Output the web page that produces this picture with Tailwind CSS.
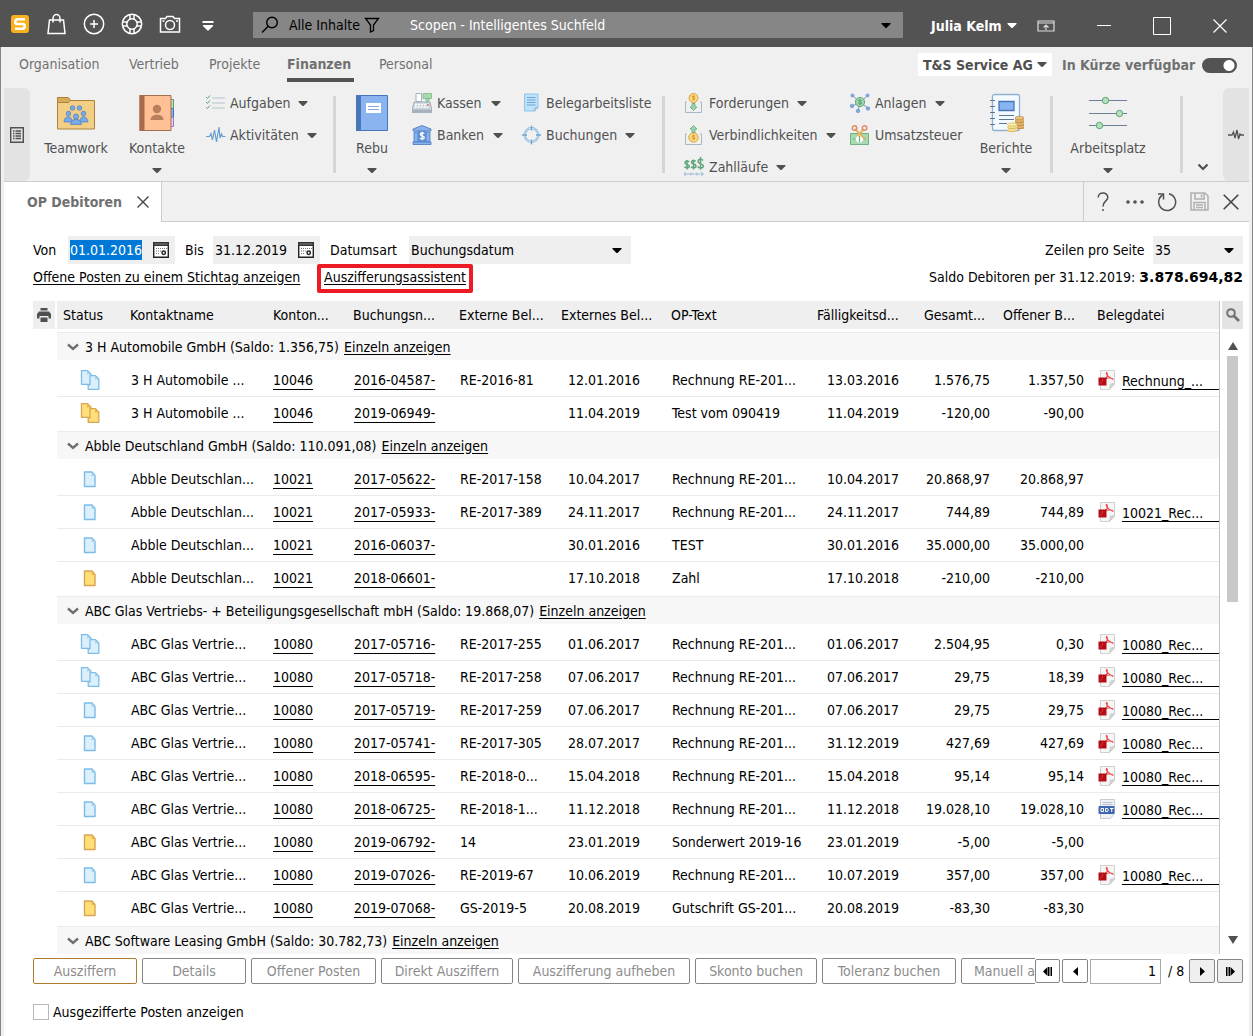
<!DOCTYPE html>
<html lang="de">
<head>
<meta charset="utf-8">
<title>OP Debitoren</title>
<script src="https://cdn.jsdelivr.net/npm/@tailwindcss/browser@4"></script>
</head>
<body class="bg-white text-black text-[14px] leading-5 font-['DejaVu_Sans_Condensed','Noto_Sans',sans-serif]">

<svg class="hidden" aria-hidden="true">
  <symbol id="down" viewBox="0 0 10 5"><path d="M0.5 0h9v1L5.5 5h-1L0.5 1z" fill="currentColor"/></symbol>
  <symbol id="doc-blue" viewBox="0 0 20 20"><path d="M4.500 3h7.500l3 3.500V17.500h-10.500z" fill="#dcf0fc" stroke="#7dbbe8" stroke-width="1.400" stroke-linejoin="round"/><path d="M11.500 3.500v3.500h3.500z" fill="#a9d5f2"/></symbol>
  <symbol id="doc-gold" viewBox="0 0 20 20"><path d="M4.500 3h7.500l3 3.500V17.500h-10.500z" fill="#ffdf78" stroke="#d8a557" stroke-width="1.400" stroke-linejoin="round"/><path d="M11.500 3.500v3.500h3.500z" fill="#f0b93c"/></symbol>
  <symbol id="docs-blue" viewBox="0 0 20 20"><path d="M1.500 .7h6l3.500 3.500V14.300h-9.500z" fill="#dcf0fc" stroke="#7dbbe8" stroke-width="1.300" stroke-linejoin="round"/><path d="M10 5.700h5.500l3.300 3.500v10.100H8.200v-4.500H10z" fill="#dcf0fc" stroke="#7dbbe8" stroke-width="1.300" stroke-linejoin="round"/><path d="M7 1v3.500h3.500zM15 6.200v3.300h3.300z" fill="#a9d5f2"/></symbol>
  <symbol id="docs-gold" viewBox="0 0 20 20"><path d="M1.500 .7h6l3.500 3.500V14.300h-9.500z" fill="#ffdf78" stroke="#d8a557" stroke-width="1.300" stroke-linejoin="round"/><path d="M10 5.700h5.500l3.300 3.500v10.100H8.200v-4.500H10z" fill="#ffdf78" stroke="#d8a557" stroke-width="1.300" stroke-linejoin="round"/><path d="M7 1v3.500h3.500zM15 6.200v3.300h3.300z" fill="#f0b93c"/></symbol>
  <symbol id="pdf" viewBox="0 0 18 20"><path d="M2.500 .5h14v14l-5 5h-9z" fill="#f6f6f6" stroke="#d0d0d0"/><path d="M16.500 13.500c-2 0-4.500 .5-4.500 1 .5 2-.5 4-1 5z" fill="#d5d5d5" stroke="#c4c4c4" stroke-width=".6"/><path d="M8.500 2c-1 2 2 6 7 7.500M9 2.500c1 3 0 5-2 6.500 2-1 5-1.300 8-.5" fill="none" stroke="#ee4a4a" stroke-width="1.200"/><path d="M0.500 7.500h8v8h-8z" fill="#b50d14"/><path d="M2 13.500c2-1 3-3 2.500-4.500" fill="none" stroke="#d8484c" stroke-width=".8"/></symbol>
  <symbol id="odt" viewBox="0 0 18 20"><path d="M2.500 .5h14v14l-4 5h-10z" fill="#eef2f7" stroke="#c5ccd6"/><path d="M4.500 3.500h10M4.500 5.500h10" stroke="#b4bfcf"/><rect x=".5" y="7" width="16" height="8" rx="1" fill="#3f66b0"/><path d="M3 9.500h2.500v3H3zM7.500 9.500h2l.8 1.500-.8 1.500h-2zM12 9.500h3.500M13.700 9.500v3.500" fill="none" stroke="#fff"/></symbol>
  <symbol id="calendar" viewBox="0 0 16 16"><path d="M.7.700h14.600v14.600H.7z" fill="#fff" stroke="#222" stroke-width="1.400"/><path d="M0 0h16v4H0z" fill="#333"/><path d="M1.500 2h13" stroke="#999" stroke-width=".8"/><path d="M3 6.500h11M3 9h5M3 11.500h4" stroke="#777" stroke-width="1.200" stroke-dasharray="1 1"/><circle cx="10.700" cy="10.700" r="1.700" fill="#fff" stroke="#222" stroke-width="1.500"/></symbol>
</svg>

<header class="flex h-[47px] items-center bg-[#535353] pl-px pr-1 text-white">
  <button class="flex w-[37px] justify-center" aria-label="Scopevisio"><svg class="mt-px size-[18px]" viewBox="0 0 18 18"><rect width="18" height="18" rx="3" fill="#fbb11e"/><path d="M14 4.300H6.500C3.500 4.300 3.500 9 6.500 9h5c3 0 3 4.700 0 4.700H4" fill="none" stroke="#fff" stroke-width="2.600"/></svg></button>
  <button class="flex w-[37px] justify-center" aria-label="Einkaufen"><svg class="size-[22px]" viewBox="0 0 22 22" fill="none" stroke="#fff" stroke-width="1.500"><path d="M3.500 7h14l1.500 13.500H2zM7 9.500V5.500a3.500 4 0 0 1 7 0v4"/></svg></button>
  <button class="flex w-[38px] justify-center" aria-label="Neu"><svg class="size-[22px]" viewBox="0 0 22 22" fill="none" stroke="#fff" stroke-width="1.500"><circle cx="11" cy="11" r="9.700"/><path d="M11 7v8M7 11h8"/></svg></button>
  <button class="flex w-[38px] justify-center" aria-label="Hilfe"><svg class="size-[22px]" viewBox="0 0 22 22" fill="none" stroke="#fff" stroke-width="1.500"><circle cx="11" cy="11" r="9.700"/><circle cx="11" cy="11" r="5.200"/><path d="M9 1.500v5M13 1.500v5M9 15.500v5M13 15.500v5M1.500 9h5M1.500 13h5M15.500 9h5M15.500 13h5"/></svg></button>
  <button class="flex w-[38px] justify-center" aria-label="Kamera"><svg class="size-[22px]" viewBox="0 0 22 22" fill="none" stroke="#fff" stroke-width="1.500"><path d="M1.500 5.500h5l1.500-2h6l1.500 2h5v13.500h-19z"/><circle cx="11" cy="12" r="4.500"/><path d="M3.500 8h2M17 8h2"/></svg></button>
  <button class="flex w-[38px] justify-center" aria-label="Mehr"><svg class="mt-1 h-[10px] w-[12px]" viewBox="0 0 12 10" fill="#fff"><path d="M.5 0h11v2H.5zM1 4h10v1L6.500 9.500h-1L1 5z"/></svg></button>

  <div class="ml-[26px] mt-[3px] flex h-[26px] min-w-0 flex-1 items-center bg-[#868686] pl-2">
    <svg class="size-[18px]" viewBox="0 0 18 18" fill="none" stroke="#000" stroke-width="1.400"><circle cx="11" cy="6.500" r="5.300"/><path d="M7 10.500L1 16.500"/></svg>
    <button class="ml-[10px] flex w-[91px] items-center justify-between whitespace-nowrap text-black">Alle Inhalte<svg class="size-4" viewBox="0 0 16 16" fill="none" stroke="#000" stroke-width="1.300"><path d="M1.500 1.500h13L9.500 8v5.500l-3 1.500V8z"/></svg></button>
    <input aria-label="Suche" placeholder="Scopen - Intelligentes Suchfeld" class="ml-[30px] min-w-0 flex-1 bg-transparent text-white outline-none placeholder:text-white">
    <svg class="mr-3 h-[5px] w-[10px] text-black"><use href="#down"/></svg>
  </div>

  <button class="ml-7 mt-1 flex w-[86px] items-center justify-between whitespace-nowrap font-bold">Julia Kelm<svg class="h-[5px] w-[10px]"><use href="#down"/></svg></button>
  <button class="ml-5 mt-1" aria-label="Menüband"><svg class="h-[12px] w-[18px]" viewBox="0 0 18 12" fill="none" stroke="#ddd" stroke-width="1.200"><path d="M1 1h16v10H1zM1 3h16M9 10V5.500M6.500 7.500L9 5l2.500 2.500"/></svg></button>
  <button class="ml-5 mt-1 flex w-[58px] justify-center" aria-label="Minimieren"><svg class="h-[2px] w-[14px]" viewBox="0 0 14 2"><path d="M0 0h14v1H0z" fill="#fff"/></svg></button>
  <button class="mt-1 flex w-[58px] justify-center" aria-label="Maximieren"><svg class="size-[18px]" viewBox="0 0 18 18"><path d="M.5.500h17v17H.5z" fill="none" stroke="#fff"/></svg></button>
  <button class="mt-1 flex w-[58px] justify-center" aria-label="Schließen"><svg class="size-[14px]" viewBox="0 0 14 14"><path d="M.5.500l13 13M13.500.500l-13 13" stroke="#fff" stroke-width="1.200"/></svg></button>
</header>

<div class="border-x border-[#858585] bg-[#f0f0f0] px-[3px]">
  <nav class="flex h-[38px] items-start whitespace-nowrap text-[#707070]">
    <a href="#" class="ml-[15px] w-[110px] pt-[7px]">Organisation</a>
    <a href="#" class="w-[80px] pt-[7px]">Vertrieb</a>
    <a href="#" class="w-[78px] pt-[7px]">Projekte</a>
    <a href="#" class="h-[35px] w-[67px] border-b-4 border-[#535353] pt-[7px] font-bold">Finanzen</a>
    <a href="#" class="ml-[25px] pt-[7px]">Personal</a>
    <button class="ml-auto mt-[6px] flex h-[23px] w-[134px] items-center justify-between bg-white pl-[5px] pr-[5px] font-bold text-[#505050]">T&amp;S Service AG<svg class="h-[5px] w-[10px]"><use href="#down"/></svg></button>
    <label class="ml-[10px] mr-3 flex w-[175px] items-center justify-between pt-2 font-bold">In Kürze verfügbar
      <input type="checkbox" checked class="h-[15px] w-[35px] appearance-none rounded-full bg-[#535353] bg-[radial-gradient(circle_at_27px_50%,#fff_5px,transparent_6px)]">
    </label>
  </nav>

  <div class="flex h-[97px] border-b border-[#cdcdcd] text-[#505050] whitespace-nowrap">
    <button class="mt-[3px] flex w-[26px] items-center justify-center rounded-r-md bg-[#e3e3e3]" aria-label="Navigation"><svg class="h-4 w-[14px]" viewBox="0 0 14 16" fill="none" stroke="#505050"><path d="M.7.700h12.600v14.600H.7z" stroke-width="1.400"/><path d="M3 4h1.500M5.500 4H11M3 6.500h1.500M5.500 6.500H11M3 9h1.500M5.500 9H11M3 11.500h1.500M5.500 11.500H11" stroke-width="1.300"/></svg></button>
    <button class="flex w-[92px] flex-col items-center pt-[10px]"><svg class="h-[36px] w-[38px]" viewBox="0 0 38 36"><path d="M.5 2.500h10.500l2.500 3h24v28.500H.5z" fill="#f3cf85" stroke="#a98339"/><path d="M.5 2.500h10.500l2.500 3-2 2H.5z" fill="#d9aa57" stroke="#a98339"/><g fill="#78a9e8" stroke="#4d7cc2" stroke-width=".7"><circle cx="15.500" cy="13" r="2.300"/><circle cx="22.500" cy="13" r="2.300"/><circle cx="11.500" cy="18.500" r="2.300"/><circle cx="26.500" cy="18.500" r="2.300"/><path d="M7 27c0-7 8-7 8.500 0zM22.500 27c.5-7 8-7 8.500 0z"/><circle cx="19" cy="21.500" r="2.600"/><path d="M13.500 29.500c0-7 11-7 11 0z"/></g></svg><span class="mt-[7px]">Teamwork</span></button>
    <button class="flex w-[70px] flex-col items-center pt-[10px]"><svg class="h-[36px] w-[36px]" viewBox="0 0 36 36"><path d="M31 4.500h3.500v9H31z" fill="#bfe3c4" stroke="#58a068"/><path d="M31 13.500h3.500v9H31z" fill="#7fb0f0" stroke="#4472c0"/><path d="M31 22.500h3.500v9H31z" fill="#e2d3f0" stroke="#9a7cc0"/><path d="M1 .5h31v35H1z" fill="#ffc095" stroke="#a56f4f"/><path d="M.5 0h5v36h-5z" fill="#a66b4b"/><circle cx="18" cy="14" r="4.200" fill="#b97f5a"/><path d="M11.500 25c0-7 13-7 13 0z" fill="#b97f5a"/></svg><span class="mt-[7px]">Kontakte</span><svg class="mt-[10px] h-[5px] w-[10px]"><use href="#down"/></svg></button>
    <div class="flex w-[141px] flex-col pl-[14px] pt-[2px]">
      <button class="flex h-8 items-center gap-1"><svg class="size-5" viewBox="0 0 20 20" fill="none"><path d="M6 5h13M6 10h13M6 15h13" stroke="#b6c3d0" stroke-width="1.200"/><path d="M0 4l1.500 1.500L4 2.500M0 9l1.500 1.500L4 7.500M0 14l1.500 1.500L4 12.500" stroke="#5fa57b"/></svg>Aufgaben<svg class="ml-1 h-[5px] w-[10px]"><use href="#down"/></svg></button>
      <button class="flex h-8 items-center gap-1"><svg class="size-5" viewBox="0 0 20 20" fill="none"><path d="M0 11.500h3.500L5 8.500 6.500 15 8.500 5l2 12 2.500-15 1 11 1.500-4 1 2.500h3" stroke="#6a9fd0" stroke-width="1.200"/></svg>Aktivitäten<svg class="ml-1 h-[5px] w-[10px]"><use href="#down"/></svg></button>
    </div>
    <div class="mt-[11px] h-[77px] w-[3px] bg-[#d5d5d5]"></div>
    <button class="flex w-[72px] flex-col items-center pt-[10px]"><svg class="h-[36px] w-[32px]" viewBox="0 0 32 36"><path d="M.5.500h31v35H.5z" fill="#8ab4f0" stroke="#4976b8"/><path d="M0 0h5v36H0z" fill="#4976b8"/><path d="M10 8h15v10H10z" fill="#fff"/><path d="M12 11.500h11M12 14.500h11" stroke="#8aa9d8"/></svg><span class="mt-[7px]">Rebu</span><svg class="mt-[10px] h-[5px] w-[10px]"><use href="#down"/></svg></button>
    <div class="flex w-[112px] flex-col pl-1 pt-[2px]">
      <button class="flex h-8 items-center gap-[5px]"><svg class="size-5" viewBox="0 0 20 20"><path d="M2 9h16l2 8v3H0v-3z" fill="#cdd6de" stroke="#94a3b0" stroke-width=".8"/><path d="M4 .5h5.500v8H4z" fill="#fff" stroke="#8fa0ae" stroke-width=".8"/><path d="M11 .5h8.500v5H11zM14 5.500h3v3h-3z" fill="#a8d9b0" stroke="#7fb88a" stroke-width=".8"/><path d="M3 11.500h14M2.500 14h15" stroke="#fff" stroke-width="1.500" stroke-dasharray="2 1"/><path d="M0 16.500h20V20H0z" fill="#a5b2bd"/><path d="M15 11h2v2h-2z" fill="#e88"/></svg>Kassen<svg class="ml-1 h-[5px] w-[10px]"><use href="#down"/></svg></button>
      <button class="flex h-8 items-center gap-[5px]"><svg class="size-5" viewBox="0 0 20 20"><path d="M10 .5L19 4v2H1V4z" fill="#86b1ec" stroke="#4a79bd" stroke-width=".8"/><path d="M2 7h4v10H2zM14 7h4v10h-4z" fill="#86b1ec" stroke="#4a79bd" stroke-width=".8"/><path d="M6 6h8v11H6z" fill="#5f8fd2"/><path d="M1 17h18v2.500H1z" fill="#86b1ec" stroke="#4a79bd" stroke-width=".8"/><path d="M12.300 8.500c-1-1-4-1-4 .7 0 2 4 1.300 4 3.300 0 1.700-3 1.800-4.300.5M10.200 6.700v8.500" fill="none" stroke="#fff" stroke-width="1.300"/></svg>Banken<svg class="ml-1 h-[5px] w-[10px]"><use href="#down"/></svg></button>
    </div>
    <div class="flex w-[142px] flex-col pl-[2px] pt-[2px]">
      <button class="flex h-8 items-center gap-1"><svg class="size-5 shrink-0" viewBox="0 0 20 20"><path d="M2.500 1h13.500v14l-3 3H2.500z" fill="#bfe2fb" stroke="#8fc2e8"/><path d="M16 15h-3v3" fill="#fff" stroke="#6fa5d0"/><path d="M5 4.500h8.500M5 7h8.500M5 9.500h8.500M5 12h8.500" stroke="#6fa5d0"/></svg>Belegarbeitsliste</button>
      <button class="flex h-8 items-center gap-1"><svg class="size-5" viewBox="0 0 20 20" fill="none"><circle cx="9.500" cy="10" r="6.800" stroke="#7fb2dd" stroke-width="2.200"/><circle cx="9.500" cy="10" r="6.800" stroke="#d0e8fa" stroke-width="1"/><path d="M9.500 .5v5M9.500 14.500v5M0 10h5M14 10h5" stroke="#6fa5d0" stroke-width="1.300"/></svg>Buchungen<svg class="ml-1 h-[5px] w-[10px]"><use href="#down"/></svg></button>
    </div>
    <div class="mt-[11px] h-[77px] w-[3px] bg-[#d5d5d5]"></div>
    <div class="flex w-[169px] flex-col pl-[19px] pt-[2px]">
      <button class="flex h-8 shrink-0 items-center gap-[5px]"><svg class="size-5 shrink-0" viewBox="0 0 20 20"><path d="M3 9H1.500v10.500h16V9H16" fill="none" stroke="#a9b8c5"/><circle cx="9.500" cy="5" r="4.500" fill="#ffd67a" stroke="#d9a441"/><path d="M10.800 3.500c-1-.7-2.500-.5-2.300.5.2 1 2.300.7 2.200 1.700 0 1-1.500 1.200-2.400.5" fill="none" stroke="#a8762a" stroke-width=".9"/><path d="M8 10.500h3V14h2l-3.500 3.500L6 14h2z" fill="#9fd4ae" stroke="#63a878" stroke-width=".8"/></svg>Forderungen<svg class="ml-[3px] h-[5px] w-[10px]"><use href="#down"/></svg></button>
      <button class="flex h-8 shrink-0 items-center gap-[5px]"><svg class="size-5 shrink-0" viewBox="0 0 20 20"><path d="M3 9H1.500v10.500h16V9H16" fill="none" stroke="#a9b8c5"/><circle cx="9.500" cy="12.500" r="4.700" fill="#ffd67a" stroke="#d9a441"/><path d="M10.800 11c-1-.7-2.500-.5-2.300.5.2 1 2.300.7 2.200 1.700 0 1-1.500 1.200-2.400.5" fill="none" stroke="#a8762a" stroke-width=".9"/><path d="M8 7.500h3V4h2L9.500 .5 6 4h2z" fill="#9fd4ae" stroke="#63a878" stroke-width=".8"/></svg>Verbindlichkeiten<svg class="ml-[3px] h-[5px] w-[10px] shrink-0"><use href="#down"/></svg></button>
      <button class="flex h-8 shrink-0 items-center gap-[5px]"><svg class="size-5 shrink-0" viewBox="0 0 20 20" fill="none"><path d="M5 5c-1-1.300-4-1.300-4 .7 0 2.300 4.300 1 4.300 3.500 0 2-3.500 2-4.800.5M3 3v9.500M11.500 4.500c-1-1.500-4-1.300-4 .7 0 2.300 4.500 1.300 4.500 3.800 0 2.300-3.700 2.200-5 .7M9.500 2.500v10M19 3.500c-1.500-2-5-1.500-5 1 0 2.700 5.300 1.600 5.300 4.600 0 2.600-4.300 2.400-5.800.5M16.500 0v12.800" stroke="#5fa57b" stroke-width="1.500"/><path d="M0 17h19M1 15v4M7 15.500v3M13 15.500v3M17 15l2.500 2-2.500 2" stroke="#9bb9d4"/></svg>Zahlläufe<svg class="ml-[3px] h-[5px] w-[10px]"><use href="#down"/></svg></button>
    </div>
    <div class="flex w-[138px] flex-col pl-4 pt-[2px]">
      <button class="flex h-8 items-center gap-[5px]"><svg class="size-5" viewBox="0 0 20 20"><path d="M10 9.500L2.500 2.500M10 9.500L17.500 2.500M10 9.500L2 13M10 9.500L18 15M10 9.500L8 18" stroke="#7d9cc0"/><circle cx="10" cy="9" r="4.600" fill="#9fd4ae" stroke="#63a878"/><g fill="#7da8e8" stroke="#5682c8" stroke-width=".5"><circle cx="2.500" cy="2.500" r="1.600"/><circle cx="17.500" cy="2.500" r="1.600"/><circle cx="2" cy="13" r="1.800"/><circle cx="18" cy="15.500" r="1.800"/><circle cx="8" cy="18" r="1.800"/></g><path d="M11.500 7.500c-1-.8-3-.6-2.800.5.200 1.200 2.800.8 2.700 2 0 1.200-2 1.400-3 .5" fill="none" stroke="#3f8a58"/></svg>Anlagen<svg class="ml-[3px] h-[5px] w-[10px]"><use href="#down"/></svg></button>
      <button class="flex h-8 items-center gap-[5px]"><svg class="size-5" viewBox="0 0 20 20" fill="none"><path d="M.5 8.500h18v11H.5z" fill="#a7dab3" stroke="#6fb383"/><circle cx="9.500" cy="14" r="3.500" fill="#fff"/><path d="M9.500 11v6M3 14h2M14 14h2" stroke="#63a878" stroke-width="1.200"/><path d="M5 4l10 10M14 4L7 11" stroke="#e5b65f" stroke-width="2"/><circle cx="4.500" cy="3" r="2.300" stroke="#e08a66" stroke-width="1.400"/><circle cx="14.500" cy="3" r="2.300" stroke="#e08a66" stroke-width="1.400"/></svg>Umsatzsteuer</button>
    </div>
    <button class="flex w-[68px] flex-col items-center pt-[8px]"><svg class="h-[40px] w-[36px]" viewBox="0 0 36 40"><rect x="4.500" y="1.500" width="27" height="36" rx="2" fill="#f3faff" stroke="#8fb1d0" stroke-width="1.300"/><path d="M2 7.500h5M2 13.500h5M2 19.500h5M2 25.500h5M2 31.500h5" stroke="#5f7890" stroke-width="1.200"/><path d="M11 8.500h15v9H11z" fill="#8ab4f0" stroke="#4976b8" stroke-width="1.300"/><path d="M11 22.500h15M11 26.500h15M11 30.500h8" stroke="#5f7890"/><path d="M27 25h9v11h-9z" fill="#deb06a"/><ellipse cx="31.500" cy="25" rx="4.500" ry="1.700" fill="#e8c080" stroke="#b88a45" stroke-width=".6"/><path d="M27 28.500c2 1.500 7 1.500 9 0M27 31.500c2 1.500 7 1.500 9 0M27 34.500c2 1.500 7 1.500 9 0" stroke="#b88a45" stroke-width=".8" fill="none"/><path d="M19.500 31.500h9.500v7.500h-9.500z" fill="#f5df92"/><ellipse cx="24.200" cy="31.500" rx="4.700" ry="1.700" fill="#fbecae" stroke="#cfae55" stroke-width=".6"/><path d="M19.500 34.500c2 1.500 7.500 1.500 9.500 0M19.500 37.500c2 1.500 7.500 1.500 9.500 0" stroke="#cfae55" stroke-width=".8" fill="none"/></svg><span class="mt-[5px]">Berichte</span><svg class="mt-[10px] h-[5px] w-[10px]"><use href="#down"/></svg></button>
    <div class="ml-[10px] mt-[11px] h-[77px] w-[3px] bg-[#d5d5d5]"></div>
    <button class="flex w-[110px] flex-col items-center pt-[10px]"><svg class="h-[36px] w-[38px]" viewBox="0 0 38 36"><path d="M0 5.500h38M0 18.500h38M0 30.500h38" stroke="#6c7f98"/><g fill="#b5e0bd" stroke="#5da472"><circle cx="16.500" cy="5.500" r="3.200"/><circle cx="30.500" cy="18.500" r="3.200"/><circle cx="10.500" cy="30.500" r="3.200"/></g></svg><span class="mt-[7px]">Arbeitsplatz</span><svg class="mt-[10px] h-[5px] w-[10px]"><use href="#down"/></svg></button>
    <div class="ml-[17px] mt-[11px] h-[77px] w-[3px] bg-[#d5d5d5]"></div>
    <button class="ml-auto flex w-[40px] items-end justify-center pb-[9px]" aria-label="Mehr anzeigen"><svg class="h-[9px] w-[12px]" viewBox="0 0 12 9"><path d="M1.500 1.500L6 6l4.500-4.500" fill="none" stroke="#505050" stroke-width="2.200"/></svg></button>
    <button class="mt-[3px] flex w-[26px] items-center justify-center rounded-l-md bg-[#e3e3e3]" aria-label="Aktivität"><svg class="h-3 w-4" viewBox="0 0 16 12"><path d="M0 6h4l1.500-3 1.500 6L9 1l1.500 9L12 5l1 1h3" fill="none" stroke="#505050" stroke-width="1.300"/></svg></button>
  </div>

  <div class="flex h-10">
    <div class="flex w-[158px] items-center gap-[18px] border-r border-[#cdcdcd] bg-white pl-[23px] font-bold text-[#707070] whitespace-nowrap"><span class="w-[92px]">OP Debitoren</span><button aria-label="Tab schließen"><svg class="block size-3" viewBox="0 0 12 12"><path d="M.5.500l11 11M11.500.500l-11 11" stroke="#444" stroke-width="1.400"/></svg></button></div>
    <div class="flex flex-1 items-stretch justify-end border-b border-[#cdcdcd] text-[#505050]">
      <div class="flex items-center border-l border-[#cdcdcd] pl-[3px]">
        <button class="flex w-8 justify-center" aria-label="Hilfe"><svg class="h-[20px] w-[12px]" viewBox="0 0 12 20" fill="none" stroke="#505050" stroke-width="1.500"><path d="M1.200 5.500c0-6 9.600-6 9.600 0C10.800 9 6 9 6 14.500"/><path d="M6 17v2"/></svg></button>
        <button class="flex w-8 justify-center" aria-label="Mehr"><svg class="h-1 w-[18px]" viewBox="0 0 18 4" fill="#505050"><circle cx="2" cy="2" r="1.800"/><circle cx="9" cy="2" r="1.800"/><circle cx="16" cy="2" r="1.800"/></svg></button>
        <button class="flex w-8 justify-center" aria-label="Aktualisieren"><svg class="size-5" viewBox="0 0 20 20" fill="none" stroke="#505050" stroke-width="1.500"><path d="M12 1.800a8.500 8.500 0 1 1-6.500 1.200"/><path d="M1 2h5.500v5.500"/></svg></button>
        <button class="flex w-8 justify-center" aria-label="Speichern"><svg class="size-[19px]" viewBox="0 0 19 19" fill="none" stroke="#b0b0b0" stroke-width="1.500"><path d="M1 1h14l3 3v14H1zM5 1v6h9V1M4 18v-7.500h11V18M11.500 2.500v3M6 13h7M6 15.500h7"/></svg></button>
        <button class="mr-[2px] flex w-8 justify-center" aria-label="Schließen"><svg class="size-4" viewBox="0 0 16 16"><path d="M.7.700l14.600 14.600M15.300.700L.7 15.300" stroke="#444" stroke-width="1.600"/></svg></button>
      </div>
    </div>
  </div>

  <main class="min-h-[814px] bg-white pl-[29px] pr-[6px] pt-[14px]">
    <div class="flex items-center whitespace-nowrap">
      <label for="von" class="w-[35px]">Von</label>
      <div class="flex h-7 w-[107px] items-center bg-[#efefef] pl-[2px]"><input id="von" value="01.01.2016" class="w-[83px] bg-transparent outline-none selection:bg-[#0078d7] selection:text-white"><button aria-label="Kalender"><svg class="block size-4"><use href="#calendar"/></svg></button></div>
      <label for="bis" class="ml-[10px] w-[28px]">Bis</label>
      <div class="flex h-7 w-[107px] items-center bg-[#efefef] pl-[2px]"><input id="bis" value="31.12.2019" class="w-[83px] bg-transparent outline-none"><button aria-label="Kalender"><svg class="block size-4"><use href="#calendar"/></svg></button></div>
      <label for="art" class="ml-[10px] w-[79px]">Datumsart</label>
      <div class="relative flex w-[222px] items-center"><select id="art" class="h-7 w-full appearance-none bg-[#efefef] pl-[2px]"><option>Buchungsdatum</option></select><svg class="pointer-events-none absolute right-[9px] h-[5px] w-[10px]"><use href="#down"/></svg></div>
      <label for="zeilen" class="ml-auto w-[108px]">Zeilen pro Seite</label>
      <div class="relative flex w-[90px] items-center"><select id="zeilen" class="h-7 w-full appearance-none bg-[#efefef] pl-[2px]"><option>35</option></select><svg class="pointer-events-none absolute right-[9px] h-[5px] w-[10px]"><use href="#down"/></svg></div>
    </div>
    <div class="flex h-[29px] items-center whitespace-nowrap">
      <a href="#" class="w-[284px] pb-1 underline underline-offset-2">Offene Posten zu einem Stichtag anzeigen</a>
      <a href="#" class="flex h-[29px] w-[156px] items-center justify-center rounded-[2px] border-4 border-[#ed1c24] pb-1 underline underline-offset-2">Auszifferungsassistent</a>
      <p class="ml-auto pb-1">Saldo Debitoren per 31.12.2019: <b class="font-['DejaVu_Sans',sans-serif]">3.878.694,82</b></p>
    </div>

    <div class="mt-2 flex h-[653px] gap-[2px] overflow-hidden">
      <button class="flex h-7 w-[22px] items-center justify-center bg-[#efefef]" aria-label="Drucken"><svg class="h-[14px] w-[14px]" viewBox="0 0 14 14" fill="#505050"><path d="M3.500 0h7v2.500h-7zM2 3.500h10L14 6v4.500h-2.500V8h-9v2.500H0V6zM3.500 9.500h7V14h-7z"/></svg></button>
      <table class="min-w-0 flex-1 table-fixed border-separate border-spacing-0 self-start border-r border-[#c4c4c4] whitespace-nowrap">
        <thead>
          <tr class="h-[29px] text-left *:h-[29px] *:overflow-hidden *:border-b *:border-white *:bg-[#efefef] *:bg-clip-padding *:p-0 *:pl-[6px] *:font-normal">
            <th class="w-[67px]">Status</th><th class="w-[143px]">Kontaktname</th><th class="w-[80px]">Konton...</th><th class="w-[106px]">Buchungsn...</th><th class="w-[102px]">Externe Bel...</th><th class="w-[110px]">Externes Bel...</th><th class="w-[146px]">OP-Text</th><th class="w-[94px]">Fälligkeitsd...</th><th class="w-[92px]"><span class="block pr-3 text-right">Gesamt...</span></th><th class="w-[94px]">Offener B...</th><th>Belegdatei</th>
          </tr>
        </thead>
        <tbody id="rows"></tbody>
      </table>
      <div class="flex w-[21px] flex-col items-center">
        <button class="flex h-7 w-full items-center justify-center bg-[#e3e3e3]" aria-label="Suchen"><svg class="size-[14px]" viewBox="0 0 14 14" fill="none" stroke="#707070"><circle cx="5" cy="5" r="3.800" stroke-width="2"/><path d="M8 8l5 5" stroke-width="2.600"/></svg></button>
        <svg class="mt-[13px] h-2 w-[10px]" viewBox="0 0 10 8" fill="#505050"><path d="M5 0l5 8H0z"/></svg>
        <div class="mt-[6px] h-[246px] w-[11px] bg-[#c8c8c8]"></div>
        <svg class="mb-[10px] mt-auto h-2 w-[10px]" viewBox="0 0 10 8" fill="#505050"><path d="M5 8l5-8H0z"/></svg>
      </div>
    </div>

    <div class="mt-[4px] flex items-center whitespace-nowrap">
      <div class="flex min-w-0 flex-1 gap-[5px] overflow-hidden text-[#8c8c8c] *:h-[26px] *:shrink-0 *:rounded-[2px] *:border">
        <button class="w-[104px] border-[#b07a2c]">Ausziffern</button>
        <button class="w-[104px] border-[#858585]">Details</button>
        <button class="w-[125px] border-[#858585]">Offener Posten</button>
        <button class="w-[132px] border-[#858585]">Direkt Ausziffern</button>
        <button class="w-[172px] border-[#858585]">Auszifferung aufheben</button>
        <button class="w-[122px] border-[#858585]">Skonto buchen</button>
        <button class="w-[134px] border-[#858585]">Toleranz buchen</button>
        <button class="w-[140px] border-[#858585] pl-3 text-left">Manuell ausziffern</button>
      </div>
      <div class="flex items-center gap-[2px]">
        <button class="flex h-6 w-[25px] items-center justify-center rounded-[2px] border border-[#858585]" aria-label="Erste Seite"><svg class="h-[9px] w-[9px]" viewBox="0 0 9 9"><path d="M4.500 0v9L0 4.500zM5 0h1.500v9H5zM7.500 0H9v9H7.500z"/></svg></button>
        <button class="flex h-6 w-[26px] items-center justify-center rounded-[2px] border border-[#858585]" aria-label="Vorige Seite"><svg class="h-[9px] w-[5px]" viewBox="0 0 5 9"><path d="M5 0v9L0 4.500z"/></svg></button>
        <input aria-label="Seite" value="1" class="h-[25px] w-[71px] border border-[#a9a9b0] pr-1 text-right outline-none">
        <span class="w-[24px] pl-[5px]">/ 8</span>
        <button class="flex h-6 w-[26px] items-center justify-center rounded-[2px] border border-[#858585] bg-[#efefef]" aria-label="Nächste Seite"><svg class="h-[9px] w-[5px]" viewBox="0 0 5 9"><path d="M0 0v9l5-4.500z"/></svg></button>
        <button class="flex h-6 w-[26px] items-center justify-center rounded-[2px] border border-[#858585] bg-[#efefef]" aria-label="Letzte Seite"><svg class="h-[9px] w-[9px]" viewBox="0 0 9 9"><path d="M4.500 0v9L9 4.500zM0 0h1.500v9H0zM2.500 0H4v9H2.500z"/></svg></button>
      </div>
    </div>
    <label class="mt-[18px] flex items-center gap-1"><input type="checkbox" class="size-4 appearance-none border border-[#b8b8b8]">Ausgezifferte Posten anzeigen</label>
  </main>
</div>

<script>
const groups = [
  ["3 H Automobile GmbH (Saldo: 1.356,75)", "3 H Automobile ...", "10046", [
    ["docs-blue", "2016-04587-", "RE-2016-81", "12.01.2016", "Rechnung RE-201...", "13.03.2016", "1.576,75", "1.357,50", "pdf", "Rechnung_..."],
    ["docs-gold", "2019-06949-", "", "11.04.2019", "Test vom 090419", "11.04.2019", "-120,00", "-90,00"]]],
  ["Abble Deutschland GmbH (Saldo: 110.091,08)", "Abble Deutschlan...", "10021", [
    ["doc-blue", "2017-05622-", "RE-2017-158", "10.04.2017", "Rechnung RE-201...", "10.04.2017", "20.868,97", "20.868,97"],
    ["doc-blue", "2017-05933-", "RE-2017-389", "24.11.2017", "Rechnung RE-201...", "24.11.2017", "744,89", "744,89", "pdf", "10021_Rec..."],
    ["doc-blue", "2016-06037-", "", "30.01.2016", "TEST", "30.01.2016", "35.000,00", "35.000,00"],
    ["doc-gold", "2018-06601-", "", "17.10.2018", "Zahl", "17.10.2018", "-210,00", "-210,00"]]],
  ["ABC Glas Vertriebs- + Beteiligungsgesellschaft mbH (Saldo: 19.868,07)", "ABC Glas Vertrie...", "10080", [
    ["docs-blue", "2017-05716-", "RE-2017-255", "01.06.2017", "Rechnung RE-201...", "01.06.2017", "2.504,95", "0,30", "pdf", "10080_Rec..."],
    ["docs-blue", "2017-05718-", "RE-2017-258", "07.06.2017", "Rechnung RE-201...", "07.06.2017", "29,75", "18,39", "pdf", "10080_Rec..."],
    ["doc-blue", "2017-05719-", "RE-2017-259", "07.06.2017", "Rechnung RE-201...", "07.06.2017", "29,75", "29,75", "pdf", "10080_Rec..."],
    ["doc-blue", "2017-05741-", "RE-2017-305", "28.07.2017", "Rechnung RE-201...", "31.12.2019", "427,69", "427,69", "pdf", "10080_Rec..."],
    ["doc-blue", "2018-06595-", "RE-2018-0...", "15.04.2018", "Rechnung RE-201...", "15.04.2018", "95,14", "95,14", "pdf", "10080_Rec..."],
    ["doc-blue", "2018-06725-", "RE-2018-1...", "11.12.2018", "Rechnung RE-201...", "11.12.2018", "19.028,10", "19.028,10", "odt", "10080_Rec..."],
    ["doc-gold", "2019-06792-", "14", "23.01.2019", "Sonderwert 2019-16", "23.01.2019", "-5,00", "-5,00"],
    ["doc-blue", "2019-07026-", "RE-2019-67", "10.06.2019", "Rechnung RE-201...", "10.07.2019", "357,00", "357,00", "pdf", "10080_Rec..."],
    ["doc-gold", "2019-07068-", "GS-2019-5", "20.08.2019", "Gutschrift GS-201...", "20.08.2019", "-83,30", "-83,30"]]],
  ["ABC Software Leasing GmbH (Saldo: 30.782,73)", "", "", []]
];
const link = t => `<a href="#" class="underline underline-offset-4">${t}</a>`;
document.getElementById("rows").innerHTML = groups.map(([title, name, no, items]) =>
  `<tr><td colspan="11" class="h-[34px] p-0 pb-1 pt-[2px]"><div class="flex h-7 items-center border-t border-[#ebebeb] bg-[#f7f7f7] pl-[10px]"><svg class="mr-[6px] h-2 w-3" viewBox="0 0 12 8"><path d="M1 1.500l5 4.500 5-4.500" fill="none" stroke="#707070" stroke-width="2.400"/></svg>${title}<a href="#" class="ml-[5px] underline underline-offset-2">Einzeln anzeigen</a></div></td></tr>` +
  items.map(([icon, buch, re, d1, text, d2, a, b, fi, fn], i) =>
  `<tr class="${i < items.length - 1 ? "*:h-[33px] *:border-b *:border-[#ebebeb]" : "*:h-[32px]"} *:p-0 *:pl-[7px]">
    <td><svg class="ml-4 block size-5"><use href="#${icon}"/></svg></td>
    <td>${name}</td><td><span class="-ml-px">${link(no)}</span></td><td>${link(buch)}</td><td>${re}</td>
    <td><span class="block pr-[25px] text-right">${d1}</span></td><td>${text}</td>
    <td><span class="block pr-[6px] text-right">${d2}</span></td>
    <td><span class="block pr-[7px] text-right">${a}</span></td>
    <td><span class="block pr-[7px] text-right">${b}</span></td>
    <td>${fn ? `<div class="flex items-center gap-[6px]"><svg class="h-5 w-[18px]"><use href="#${fi}"/></svg><a href="#" class="h-[19px] flex-1 border-b border-black">${fn}</a></div>` : ""}</td>
  </tr>`).join("")).join("");
const von = document.getElementById("von");
von.focus();
von.select();
</script>
</body>
</html>
